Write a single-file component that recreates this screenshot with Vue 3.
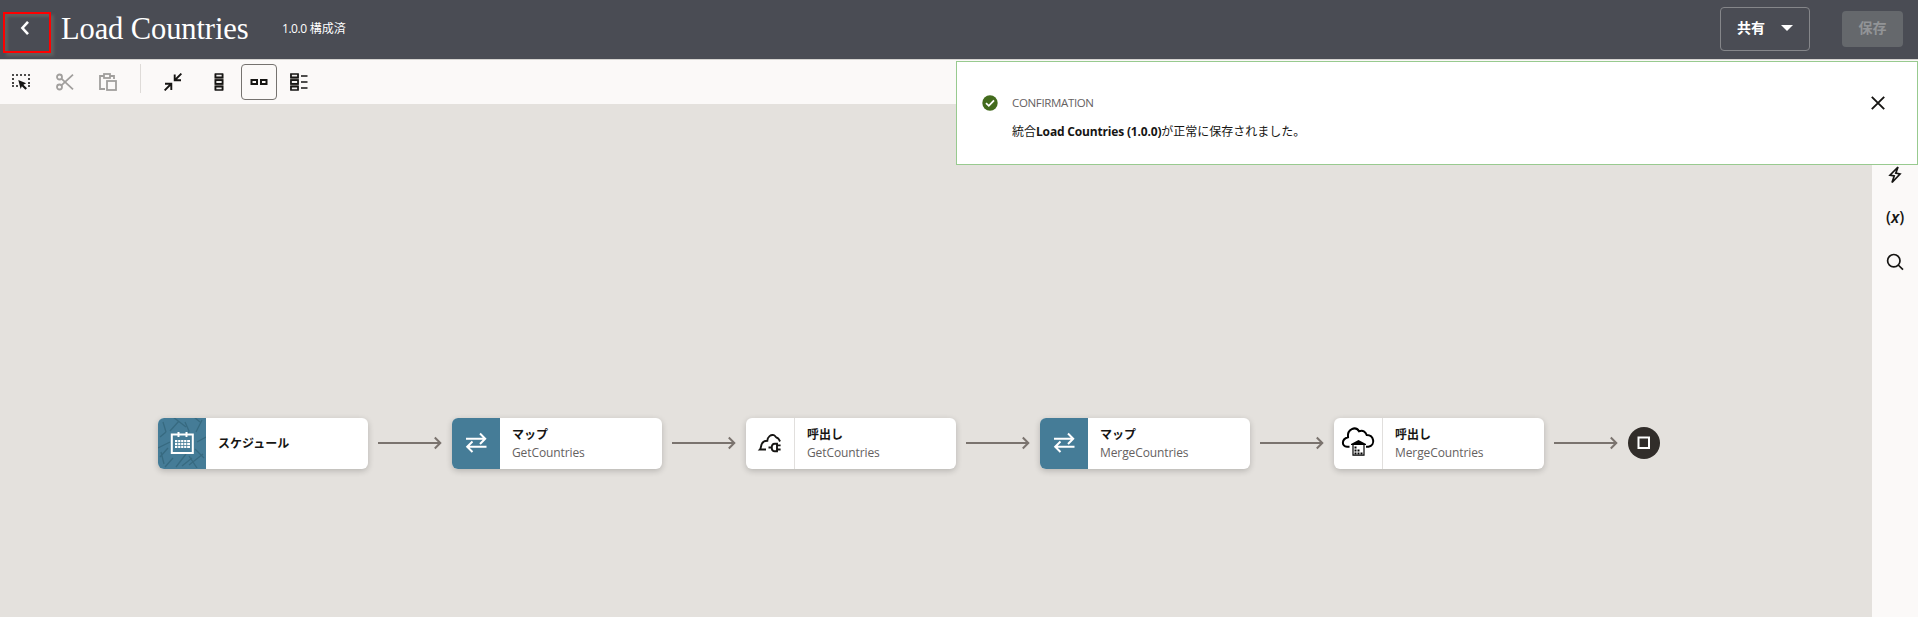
<script setup>
const steps = [
  { id: 1, kind: 'schedule', title: 'スケジュール', name: '' },
  { id: 2, kind: 'map', title: 'マップ', name: 'GetCountries' },
  { id: 3, kind: 'plug', title: '呼出し', name: 'GetCountries' },
  { id: 4, kind: 'map', title: 'マップ', name: 'MergeCountries' },
  { id: 5, kind: 'erp', title: '呼出し', name: 'MergeCountries' },
]
</script>

<template>
  <div class="page">
    <header class="header">
      <button class="back" aria-label="Back">
        <svg width="10" height="16" viewBox="0 0 10 16"><path d="M8 1.8 2.4 8 8 14.2" fill="none" stroke="#fff" stroke-width="2.6" /></svg>
      </button>
      <h1 class="title">Load Countries</h1>
      <span class="version"><span class="num">1.0.0</span> 構成済</span>
      <div class="actions">
        <button class="share">共有
          <svg width="12" height="6" viewBox="0 0 12 6"><path d="M0 0H12L6 6Z" fill="#fff" /></svg>
        </button>
        <button class="save">保存</button>
      </div>
    </header>

    <div class="toolbar">
      <button class="tool select">
        <svg width="18" height="18" viewBox="0 0 18 18"><g fill="none" stroke="#161513" stroke-width="1.6"><path d="M0 2H18M0 13H6M16 13H18" stroke-dasharray="2 2" /><path d="M1 5V12M17 5V12" stroke-dasharray="2 2" /></g><path d="M6.3 7 14.2 10.3 11.4 11.8 15 15.3 13.4 16.8 9.9 13.3 8.6 16Z" fill="#161513" /></svg>
      </button>
      <button class="tool cut">
        <svg width="18" height="18" viewBox="0 0 18 18" fill="none" stroke="#a19f9d" stroke-width="1.8"><circle cx="3.5" cy="4" r="2.5" /><circle cx="3.5" cy="14" r="2.5" /><path d="M5.4 5.7 17 16.4M5.4 12.3 17 1.6" /></svg>
      </button>
      <button class="tool paste">
        <svg width="18" height="18" viewBox="0 0 18 18" fill="none" stroke="#a19f9d" stroke-width="1.8"><path d="M5 3H1V16H6M11 3H15V6" /><rect x="5" y="1" width="6" height="4" /><rect x="8" y="8" width="9" height="9" /></svg>
      </button>
      <span class="divider"></span>
      <button class="tool collapse">
        <svg width="18" height="18" viewBox="0 0 18 18" fill="none" stroke="#161513" stroke-width="1.9"><path d="M17.4.6 11 7M10.7 1.5V7.3H17M.6 17.4 7 11M1 10.7H7.3V17" /></svg>
      </button>
      <button class="tool vertical">
        <svg width="10" height="18" viewBox="0 0 10 18"><path d="M.5 1H9.5V17H.5Z" fill="#85827f" /><path d="M1.5 1H8.5V4.3H1.5ZM1.5 7.2H8.5V10.8H1.5ZM1.5 13.7H8.5V17H1.5Z" fill="#f0efee" stroke="#161513" stroke-width="1.7" /></svg>
      </button>
      <button class="tool horizontal active">
        <svg width="18" height="6" viewBox="0 0 18 6" fill="none" stroke="#161513" stroke-width="2"><path d="M1.5 1H7V5H1.5ZM11 1H16.5V5H11Z" /></svg>
      </button>
      <button class="tool outline">
        <svg width="18" height="18" viewBox="0 0 18 18"><path d="M.2 1H8.8V17H.2Z" fill="#85827f" /><path d="M1 1H8V4.3H1ZM1 7.2H8V10.8H1ZM1 13.7H8V17H1Z" fill="#f0efee" stroke="#161513" stroke-width="1.7" /><path d="M11 3H17.5M11 9H17.5M11 15H17.5" stroke="#161513" stroke-width="1.7" /></svg>
      </button>
    </div>

    <main class="workspace">
      <section class="canvas">
        <div class="flow">
          <template v-for="step in steps" :key="step.id">
            <article class="card">
              <div class="icon" :class="step.kind">
                <svg v-if="step.kind === 'schedule'" width="48" height="51" viewBox="0 0 48 51">
                  <g fill="none" stroke="#376a80" stroke-width="1.3"><path d="M5 5 8 15M12 14 21 4M15 0 28 10M27 5 31 14 29 20M44 3 38 15M36 0 42 5M2 20 8 15M0 31 12 25M2 40 10 31M7 50 15 41M18 50 28 37M24 49 34 41M31 48 45 37M37 32 46 41M39 25 48 20M3 35 6 47M31 39 39 51" /></g>
                  <g fill="none" stroke="#fff" stroke-width="2"><rect x="13.8" y="17.5" width="21" height="18.5" /><path d="M20.5 15V20M28.5 15V20" /></g>
                  <path d="M17 23H32V31H17Z" fill="#fff" /><path d="M19.7 23V31M22.7 23V31M25.7 23V31M28.7 23V31M17 25.5H32M17 28.5H32" stroke="#457c97" stroke-width=".8" />
                </svg>
                <svg v-else-if="step.kind === 'map'" width="48" height="51" viewBox="0 0 48 51" fill="none" stroke="#fff" stroke-width="2"><path d="M14 21.7H33.5M28 16.5 33.2 21.7 28 27M34.5 29.7H15M20.5 24.5 15.2 29.7 20.5 35" /></svg>
                <svg v-else-if="step.kind === 'plug'" width="48" height="51" viewBox="0 0 48 51" fill="none" stroke="#161513" stroke-width="1.9"><path d="M20 32.5H14C15 31.5 15 28 16 26.5 17 24.3 19.5 23.8 21.3 23.8 21.5 19.8 25 17.2 27.8 18.2 29.5 18.8 29.3 20 30.5 20.5 33 21.3 33 22.5 34 24.5M22.5 30.5H26" /><path d="M31 26.8H28.7C24.8 26.8 24.8 34.3 28.7 34.3H31ZM31 28.4H34.6M31 32.5H34.6" /></svg>
                <svg v-else width="48" height="51" viewBox="0 0 48 51"><path d="M15.5 29.7H13C7.4 29.5 7.3 22 14 20.2 13 12 21.5 8.8 25 14.2 29 12.8 31.5 14.5 32.7 18 40 18 42 28 34.5 29.7H32" fill="none" stroke="#000" stroke-width="2" /><path d="M17 28V27L24.5 23 32 27V28Z" fill="#000" /><path d="M19 28V38.2H30V28" fill="none" stroke="#000" stroke-width="1.2" /><path d="M20.5 29.5h2v2h-2zM20.5 32.5h2v2h-2zM20.5 35.5h2v2h-2zM23.5 32.5h2v2h-2zM23.5 35.5h2v2h-2zM26.5 35.5h2v2h-2z" fill="#000" /></svg>
              </div>
              <div class="label">
                <strong>{{ step.title }}</strong>
                <span v-if="step.name">{{ step.name }}</span>
              </div>
            </article>
            <svg class="arrow" width="64" height="14" viewBox="0 0 64 14" fill="none" stroke="#7a736e" stroke-width="2"><path d="M0 7H62.5" /><path d="M56.8 1.5 62.3 7 56.8 12.5" /></svg>
          </template>
          <span class="end"><svg width="14" height="14" viewBox="0 0 14 14"><rect x="1.5" y="1.5" width="10.5" height="10.5" fill="none" stroke="#fff" stroke-width="2" /></svg></span>
        </div>
      </section>
      <aside class="side">
        <svg width="18" height="18" viewBox="0 0 18 18"><path d="M12 1 4 9.2 8.2 10 6 16.5 14 8 9.8 7.2Z" fill="none" stroke="#161513" stroke-width="1.7" /></svg>
        <span class="variable">(<i>x</i>)</span>
        <svg width="18" height="18" viewBox="0 0 18 18" fill="none" stroke="#161513" stroke-width="1.7"><circle cx="7.8" cy="7.7" r="6.2" /><path d="M12.2 12 17 16.7" /></svg>
      </aside>
    </main>

    <div class="toast">
      <svg class="ok" width="16" height="16" viewBox="0 0 16 16"><circle cx="8" cy="8" r="7.7" fill="#436b1d" /><path d="M4 8.2 6.8 10.8 12 5.3" fill="none" stroke="#fff" stroke-width="1.8" /></svg>
      <div class="message">
        <div class="caption">CONFIRMATION</div>
        <div class="body">統合<b>Load Countries (1.0.0)</b>が正常に保存されました。</div>
      </div>
      <button class="close" aria-label="Close"><svg width="14" height="14" viewBox="0 0 14 14"><path d="M.8.8 13.2 13.2M13.2.8.8 13.2" stroke="#161513" stroke-width="1.9" /></svg></button>
    </div>
  </div>
</template>

<style>
body { margin: 0; overflow: hidden; }
</style>

<style scoped>
.page { position: relative; display: flex; flex-direction: column; width: 1918px; height: 617px; overflow: hidden; font-family: "Open Sans", "Noto Sans CJK JP", sans-serif; color: #161513; }
button { display: flex; align-items: center; justify-content: center; padding: 0; border: 0; background: none; font: inherit; box-sizing: border-box; }
svg { display: block; flex: none; }
.header { display: flex; align-items: center; height: 59px; flex: none; background: #4a4c54; color: #fff; }
.back { width: 48px; height: 41px; margin: 5px 0 0 3px; border: 2px solid #f00; box-shadow: 3px 3px 3px #60605f, inset 3px 3px 3px #60605f; }
.back svg { margin: -8px 0 0 -5px; }
.title { width: 190px; margin: 0 0 2px 10px; font: 400 30.5px/40px "Liberation Serif", serif; letter-spacing: -.1px; white-space: nowrap; }
.version { margin: 0 0 1px 31px; font-size: 12px; line-height: 20px; white-space: nowrap; }
.num { letter-spacing: -.45px; }
.actions { display: flex; align-items: center; margin: 0 0 2px auto; padding-right: 15px; gap: 32px; font-size: 14px; line-height: 20px; font-weight: 700; }
.share { width: 90px; height: 44px; gap: 16px; padding-bottom: 2px; color: #fff; border: 1px solid #85868a; border-radius: 4px; }
.save { width: 61px; height: 36px; padding-bottom: 2px; background: #65686c; color: #929497; border-radius: 4px; }
.toolbar { display: flex; align-items: center; height: 45px; flex: none; box-sizing: border-box; border-top: 1px solid #d5d3d0; padding: 0 0 1px 3px; background: #fbf9f8; }
.tool { width: 36px; height: 36px; }
.cut { margin-left: 8px; }
.paste { margin-left: 7px; }
.divider { width: 1px; height: 29px; margin: 0 14px 6px 14px; background: #dedbd8; }
.vertical { margin-left: 10px; }
.horizontal { margin-left: 4px; }
.active { border: 1px solid #75726f; border-radius: 4px; }
.outline { margin-left: 4px; }
.workspace { display: flex; flex: 1; }
.canvas { flex: 1; background: #e4e1dd; }
.flow { display: flex; align-items: center; padding: 314px 0 0 158px; }
.card { display: flex; width: 210px; height: 51px; flex: none; overflow: hidden; border-radius: 6px; background: #fff; box-shadow: 0 2px 6px rgba(0, 0, 0, .2); }
.icon { width: 48px; flex: none; }
.icon svg { margin-top: -1px; }
.schedule, .map { background: #457c97; }
.plug, .erp { border-right: 1px solid #e1dfdd; }
.label { display: flex; flex-direction: column; justify-content: center; padding-left: 12px; font-size: 12px; line-height: 18px; }
.label span { color: #65615f; letter-spacing: -.1px; }
.arrow { margin: 0 10px 1px; }
.end { display: flex; align-items: center; justify-content: center; width: 32px; height: 32px; margin-bottom: 1px; flex: none; border-radius: 50%; background: #312d2a; }
.side { display: flex; flex-direction: column; align-items: center; width: 46px; padding-top: 62px; box-sizing: border-box; background: #fbf9f8; gap: 26px; }
.variable { margin-top: -2px; font: 500 16px/18px "Noto Sans", sans-serif; }
.variable + svg { margin-top: 1px; }
.variable i { font-weight: 600; }
.toast { position: absolute; top: 61px; right: 0; display: flex; width: 962px; height: 104px; box-sizing: border-box; border: 1px solid #98ca8f; background: #fff; }
.ok { margin: 33px 14px 0 25px; }
.message { padding-top: 32px; font-size: 12px; }
.caption { color: #65615f; line-height: 18px; letter-spacing: -.35px; font-size: 11.5px; }
.body { margin-top: 10px; line-height: 20px; white-space: nowrap; }
.body b { letter-spacing: -.17px; }
.close { width: 32px; height: 32px; margin: 25px 23px 0 auto; }
</style>
